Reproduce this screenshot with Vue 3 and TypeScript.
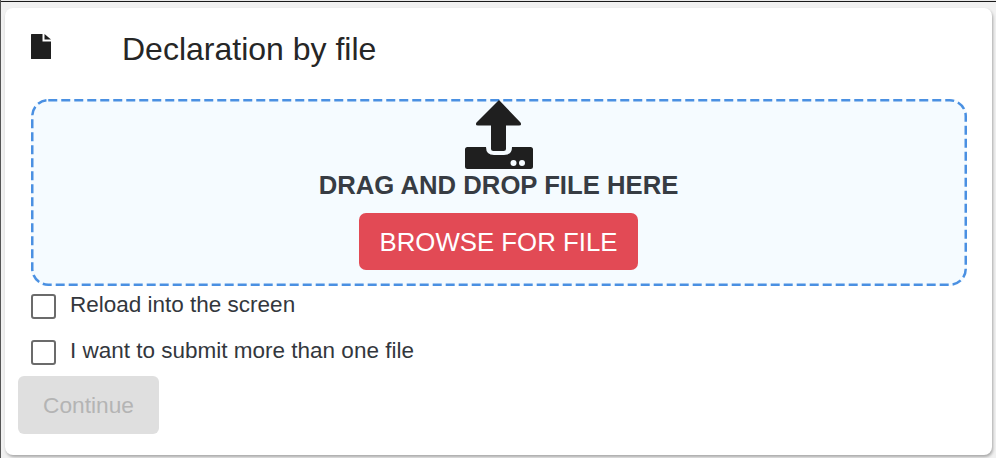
<script setup lang="ts">
const options: string[] = ['Reload into the screen', 'I want to submit more than one file']
</script>

<template>
  <div class="screen">
    <section class="card">
      <header class="head">
        <svg class="file-icon" viewBox="0 0 20 25" aria-hidden="true">
          <path d="M.6 0H11.500V7.500H20V24.400Q20 25 19.400 25H.6Q0 25 0 24.400V.6Q0 0 .6 0Z" fill="#1f1f1f" />
          <path d="M13.500 0 20 5.500H13.500Z" fill="#1f1f1f" />
        </svg>
        <h1 class="title">Declaration by file</h1>
      </header>

      <div class="drop">
        <svg class="dashes" viewBox="0 0 936 187" aria-hidden="true">
          <rect x="1.250" y="1.250" width="933.500" height="184.500" rx="16" ry="16" />
        </svg>
        <svg class="upload" viewBox="0 0 68 70" aria-hidden="true">
          <path d="M34 0 11.500 22.500Q9.800 25.500 13 25.500H26V48.500Q26 51 28.500 51H38.500Q41 51 41 48.500V25.500H54Q57.200 25.500 55.500 22.500Z" fill="#1f1f1f" />
          <path d="M2.500 47H21Q21 55 29 55H39Q47 55 47 47H65.500Q68 47 68 49.500V66.500Q68 69 65.500 69H2.500Q0 69 0 66.500V49.500Q0 47 2.500 47Z" fill="#1f1f1f" />
          <circle cx="48.500" cy="63" r="3" fill="#f5fbff" />
          <circle cx="57" cy="63" r="3" fill="#f5fbff" />
        </svg>
        <p class="drop-text">DRAG AND DROP FILE HERE</p>
        <button class="browse" type="button">BROWSE FOR FILE</button>
      </div>

      <label v-for="option in options" :key="option" class="option">
        <span class="box"></span>
        <span class="label">{{ option }}</span>
      </label>

      <button class="continue" type="button" disabled>Continue</button>
    </section>
  </div>
</template>

<style scoped>
.screen {
  box-sizing: border-box;
  width: 996px;
  height: 458px;
  overflow: hidden;
  padding: 8px 4px 3px 4px;
  background: #f1f1f1;
  box-shadow: inset 0 1px #e8e8e8, inset 0 2px #1a1a1a;
  border-left: 1px solid #555;
  font-family: "Liberation Sans", Arial, sans-serif;
}
.card {
  box-sizing: border-box;
  height: 447px;
  background: #fff;
  border-radius: 8px;
  box-shadow: 1px 2px 3px rgba(0, 0, 0, 0.3);
  padding: 0 25px 0 13px;
  display: flex;
  flex-direction: column;
  align-items: flex-start;
}
.head {
  display: flex;
  align-items: flex-start;
  height: 91px;
  margin-left: 13px;
}
.file-icon {
  width: 20px;
  height: 25px;
  margin-top: 26px;
}
.title {
  margin: 23px 0 0 71px;
  font-size: 32px;
  line-height: 36px;
  font-weight: 400;
  color: #262626;
}
.drop {
  position: relative;
  box-sizing: border-box;
  width: 936px;
  height: 187px;
  margin-left: 13px;
  padding-right: 1px;
  background: #f5fbff;
  border-radius: 16px;
  display: flex;
  flex-direction: column;
  align-items: center;
}
.dashes {
  position: absolute;
  inset: 0;
  width: 100%;
  height: 100%;
}
.dashes rect {
  fill: none;
  stroke: #4a90e2;
  stroke-width: 2.5;
  stroke-dasharray: 9 4;
}
.upload {
  position: relative;
  width: 68px;
  height: 70px;
  margin-top: 1px;
  flex: none;
}
.drop-text {
  margin: 0;
  font-size: 25.700px;
  line-height: 30px;
  font-weight: 700;
  color: #373c43;
}
.browse {
  width: 279px;
  height: 57px;
  margin-top: 13px;
  padding-top: 3px;
  border: 0;
  border-radius: 7px;
  background: #e24a55;
  color: #fff;
  font: 400 25.800px "Liberation Sans", Arial, sans-serif;
}
.option {
  display: flex;
  align-items: flex-start;
  height: 46px;
  margin-left: 13px;
  padding-top: 8px;
  box-sizing: border-box;
}
.box {
  box-sizing: border-box;
  width: 25px;
  height: 25px;
  border: 2px solid #6b6b6b;
  border-radius: 3px;
  background: #fff;
}
.label {
  margin-left: 14px;
  margin-top: -2px;
  font-size: 22.500px;
  line-height: 25px;
  color: #33373d;
}
.continue {
  width: 141px;
  height: 58px;
  margin-top: -2px;
  border: 0;
  border-radius: 6px;
  background: #dfdfdf;
  color: #b4b4b4;
  font: 400 22.700px "Liberation Sans", Arial, sans-serif;
}
</style>
